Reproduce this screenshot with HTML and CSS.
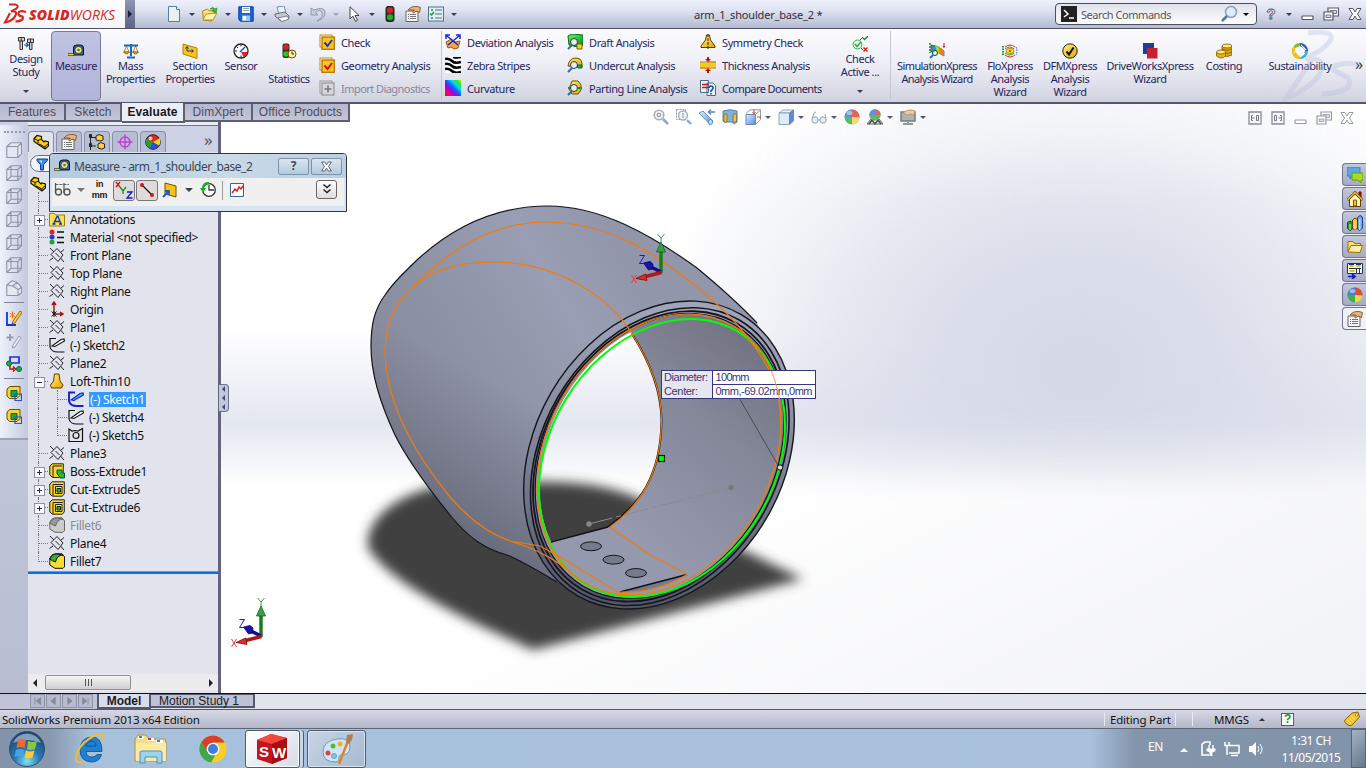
FILE: index.html
```html
<!DOCTYPE html>
<html lang="en">
<head>
<meta charset="utf-8">
<title>SolidWorks Premium 2013</title>
<link rel="stylesheet" href="styles.css">
</head>
<body>
<svg class="defs" aria-hidden="true">
<defs>
<linearGradient id="gold" x1="0" y1="0" x2="1" y2="1"><stop offset="0" stop-color="#fff27a"/><stop offset="1" stop-color="#e5a400"/></linearGradient>
<linearGradient id="blu" x1="0" y1="0" x2="1" y2="1"><stop offset="0" stop-color="#d9ebff"/><stop offset="1" stop-color="#3b78c8"/></linearGradient>
<linearGradient id="grn" x1="0" y1="0" x2="1" y2="1"><stop offset="0" stop-color="#5dff5d"/><stop offset="1" stop-color="#008a1c"/></linearGradient>
<linearGradient id="rainbow" x1="1" y1="0" x2="0" y2="1"><stop offset="0" stop-color="#d8f000"/><stop offset=".15" stop-color="#30e040"/><stop offset=".3" stop-color="#00e0e0"/><stop offset=".48" stop-color="#1060ff"/><stop offset=".65" stop-color="#a000e0"/><stop offset=".85" stop-color="#ff0060"/><stop offset="1" stop-color="#f00"/></linearGradient>
<symbol id="new" viewBox="0 0 16 16"><path d="M2.500.5h8l3 3v12h-11z" fill="#e8f2f6" stroke="#5a7f94"/><path d="M10.500.5v3h3" fill="#fff" stroke="#5a7f94"/></symbol>
<symbol id="open" viewBox="0 0 16 16"><path d="M.5 5l5-2 2 2 5-1v3l-3 8-8-1z" fill="#ffe27a" stroke="#b98313"/><path d="M1 14l3-6 11-1-4 7z" fill="#fff2b4" stroke="#c38b17"/><path d="M8 3q3-3 5 0l2-1-1 5-4-2 2-1q-1-2-4-1" fill="#38c428" stroke="#14821c" stroke-width=".6"/></symbol>
<symbol id="save" viewBox="0 0 16 16"><path d="M.8.8h14.400v14.400H2.500L.8 13.500z" fill="#1c63d8" stroke="#0b3ba0"/><path d="M4 1h8v6H4z" fill="#fff"/><path d="M5 2.500h6M5 4.500h6" stroke="#8aa" /><path d="M4 9.500h8v5.500H4z" fill="#9cc8f4"/><path d="M5 10h3v4H5z" fill="#fff"/></symbol>
<symbol id="print" viewBox="0 0 16 16"><path d="M3 1l7-1 2 7-7 1z" fill="#eaf4ff" stroke="#5a7890" stroke-width=".8"/><path d="M1 8l10-2 4 4v2l-8 3-6-5z" fill="#c5c9d2" stroke="#4f5668" stroke-width=".8"/><path d="M4 12l9-2 2 3-7 2.500z" fill="#fff" stroke="#4f5668" stroke-width=".7"/></symbol>
<symbol id="undo" viewBox="0 0 16 16"><path d="M1 2v7h7L5.500 6.500Q11 2 12 7t-5 8q9-3 8-9T4 4z" fill="#c7cbd8" stroke="#8d93a6" stroke-width=".9"/></symbol>
<symbol id="cursor" viewBox="0 0 16 16"><path d="M4 .8v12l3-2.500 2.500 5 2-1-2.500-4.800h4z" fill="#fff" stroke="#444"/></symbol>
<symbol id="traffic" viewBox="0 0 16 16"><rect x="4" y=".5" width="8" height="15" rx="2" fill="#333" stroke="#222"/><circle cx="8" cy="4.300" r="3" fill="#e02020"/><circle cx="8" cy="11.200" r="3" fill="#18b818"/></symbol>
<symbol id="props" viewBox="0 0 16 16"><path d="M1 5h12v10.500H1z" fill="#f4f4f4" stroke="#666"/><path d="M3 8.500h1m1 0h6M3 10.500h1m1 0h6M3 12.500h1m1 0h6" stroke="#777"/><path d="M3 4q3-4 9-3.500l3.500 1-1 5-3-1.500-3 2-1-1 2-2z" fill="#e8b878" stroke="#704818" stroke-width=".8"/></symbol>
<symbol id="list" viewBox="0 0 16 16"><rect x=".5" y="1" width="15" height="14" fill="#dfeff4" stroke="#46788c"/><path d="M3 4h2M3 12h2" stroke="#46788c" stroke-width="1.500"/><path d="M2 7.500l1.500 1.500 2.500-3" stroke="#1a9c28" stroke-width="1.500" fill="none"/><path d="M7 4h7M7 8h7M7 12h7" stroke="#5a6c74"/></symbol>
<symbol id="design" viewBox="0 0 16 16"><path d="M.5 1.500h6v3.500h-6zM2 5v8.500h2.500V5M9.500 3h6v3.500h-6zM11.500 6.500v7H14v-7" fill="#d4d4d4" stroke="#333"/><path d="M3.200 1.500V5M12.500 3v3.500" stroke="#333"/><path d="M6 9h4M8 7l2.500 2L8 11" fill="none" stroke="#1a50c0" stroke-width="1.200"/></symbol>
<symbol id="measure" viewBox="0 0 16 16"><path d="M5.500 12V5q0-3 3-3h4q3 0 3 3v7z" fill="#2c68b4" stroke="#111"/><circle cx="10.500" cy="7" r="3.600" fill="#f7e45c" stroke="#222" stroke-width=".7"/><circle cx="10.500" cy="7" r="1.300" fill="#3c6cac"/><path d="M0 10.500h6v2H0z" fill="#f4d410" stroke="#222" stroke-width=".6"/></symbol>
<symbol id="mass" viewBox="0 0 16 16"><path d="M8 1v12M1 2.500h14M4 14.500h8" stroke="#1668c0" stroke-width="2"/><path d="M3.500 3L1 9h5zM12.500 3L10 9h5z" fill="none" stroke="#886000" stroke-width=".7"/><path d="M.5 9h6q-3 4-6 0M9.500 9h6q-3 4-6 0" fill="#f0b410" stroke="#744c00" stroke-width=".7"/></symbol>
<symbol id="section" viewBox="0 0 16 16"><path d="M1 1l14 4v10.500L1 11z" fill="#fcc414" stroke="#b48000"/><path d="M5 8V4M3.500 5.500L5 3.500l1.500 2M5 8h6M9.500 6.500L11.500 8 9.500 9.500" fill="none" stroke="#1030a0"/></symbol>
<symbol id="sensor" viewBox="0 0 16 16"><circle cx="8" cy="8" r="7" fill="#fff" stroke="#222" stroke-width="1.300"/><path d="M8 9h6a6 6 0 01-3.500 5z" fill="#e82020"/><path d="M7 9l5-5" stroke="#1048e0" stroke-width="1.500"/><path d="M8 1.500v2M2 8h2M3.500 3.500l1.500 1.500M8 12.500v2" stroke="#222"/></symbol>
<symbol id="stats" viewBox="0 0 16 16"><rect x="1.500" y=".5" width="7" height="14.500" rx="2" fill="#333"/><circle cx="5" cy="4" r="2.800" fill="#e02020"/><circle cx="5" cy="11" r="2.800" fill="#28c828"/><circle cx="11" cy="11" r="4" fill="#fff0a0" stroke="#785000"/><path d="M11 8.500V11h2" stroke="#222" fill="none"/></symbol>
<symbol id="checkb" viewBox="0 0 16 16"><rect x="1" y="1" width="12" height="12" fill="#fff" stroke="#c8860c"/><rect x="3" y="3" width="12.300" height="12.300" fill="#fcc41c" stroke="#b87400" stroke-width="1.300"/><path d="M5.500 8.500l3 3.500 4.500-6" fill="none" stroke="currentColor" stroke-width="2"/></symbol>
<symbol id="import" viewBox="0 0 16 16"><rect x="1" y="1" width="12" height="12" fill="#e4e4e8" stroke="#999"/><rect x="3" y="3" width="12" height="12" fill="#d8d8dc" stroke="#888"/><path d="M9 5.500v7M5.500 9h7" stroke="#777" stroke-width="1.600"/></symbol>
<symbol id="deviation" viewBox="0 0 16 16"><path d="M1 8l5-3 4 3 5-1-2 7-4 1-3-2-3 1z" fill="#f0a83c" stroke="#a05808"/><path d="M2 2l11 9M14 2L3 11M1 5V1h4M11 1h4v4" fill="none" stroke="#1428d8" stroke-width="1.500"/></symbol>
<symbol id="zebra" viewBox="0 0 16 16"><path d="M0 0h16v16H0z" fill="#fff"/><path d="M0 2q4-1 7 2t9 1M0 7q4-1 7 2t9 1M0 12q4-1 7 2t9 1M8 0q4 1 8 0" fill="none" stroke="#000" stroke-width="2.600"/></symbol>
<symbol id="curv" viewBox="0 0 16 16"><path d="M0 0h16v16H0z" fill="url(#rainbow)"/></symbol>
<symbol id="draft" viewBox="0 0 16 16"><path d="M1 2l4-2 11 1v10l-5 2-9-2z" fill="url(#grn)" stroke="#086414"/><path d="M10 10h5v5h-5z" fill="#fcd020" stroke="#846000"/><circle cx="7" cy="8" r="3.500" fill="#dff0f8" stroke="#333"/><path d="M5 11l-4 4" stroke="#2c68d0" stroke-width="2"/></symbol>
<symbol id="undercut" viewBox="0 0 16 16"><path d="M1 9q1-8 8-8t6 9H9z" fill="url(#gold)" stroke="#6c5000"/><path d="M10 8h5v3h-4z" fill="#20b030" stroke="#064"/><circle cx="7" cy="8" r="3.500" fill="#dff0f8" stroke="#333"/><path d="M5 11l-4 4" stroke="#2c68d0" stroke-width="2"/></symbol>
<symbol id="parting" viewBox="0 0 16 16"><path d="M5 1h6l3 4v5l-3 4H5L2 9z" fill="url(#gold)" stroke="#6c5000"/><path d="M1 8h14" stroke="#0c9c20" stroke-width="2"/><circle cx="7" cy="8" r="3.500" fill="#dff0f8" stroke="#333"/><path d="M5 11l-4 4" stroke="#2c68d0" stroke-width="2"/></symbol>
<symbol id="symm" viewBox="0 0 16 16"><path d="M6.500 1h3l1 5 4.500 6v1.500H1V12l4.500-6z" fill="url(#gold)" stroke="#5c3c00"/><path d="M8 0v16" stroke="#402800" stroke-dasharray="3 1"/></symbol>
<symbol id="thick" viewBox="0 0 16 16"><path d="M0 5q4 2 8 0t8 0v6q-4-2-8 0t-8 0z" fill="#f8c828"/><path d="M0 5h16M0 11h16" stroke="#b07800"/><path d="M8 5L5 2h2V0h2v2h2zM8 11l-3 3h2v2h2v-2h2z" fill="#d01010"/></symbol>
<symbol id="compare" viewBox="0 0 16 16"><path d="M.5.5h8v12h-8zM7 3h6l2.500 2.500v10H7z" fill="#e6f0fa" stroke="#4c6c8c"/><path d="M2 4.500h6M2 7.500h6" stroke="#e01010" stroke-width="1.600"/><path d="M9 8q0-2 2-2t2 2-2 2.500v1.500m0 1v1.500" fill="none" stroke="#1c50b0" stroke-width="1.600"/></symbol>
<symbol id="checkact" viewBox="0 0 16 16"><circle cx="5.500" cy="8.500" r="4.500" fill="#e0ffe0" stroke="#34a844"/><path d="M3 8l2 2.500L9 6" stroke="#34a844" stroke-width="1.500" fill="none"/><path d="M11 2l1.500 1.500L16 0" stroke="#138a18" fill="none" stroke-width="1.300"/><path d="M8 4l3-3M9 12l2 2" stroke="#2050d0"/><path d="M11.500 11.500l4 4m0-4l-4 4" stroke="#e01818" stroke-width="1.400"/></symbol>
<symbol id="simx" viewBox="0 0 16 16"><path d="M1 0v10" stroke="#14a020" stroke-width="1.600" stroke-dasharray="2 1"/><path d="M2 2q7 0 13 6v5q-6-5-13-4z" fill="#2c90d0" stroke="#333" stroke-width=".6"/><path d="M8 3.500q5 1.500 7 4.500v5l-5-3z" fill="#f07810"/><path d="M6 2.700l3.500 1 1.500 7-3-1.500z" fill="#a8d820"/><circle cx="6" cy="10" r="2.500" fill="#dff" stroke="#333"/><path d="M4 12l-3 3" stroke="#2c68d0" stroke-width="2"/><path d="M15 0v4M14 3l1 1.500L16 3" fill="none" stroke="#d01010"/></symbol>
<symbol id="flox" viewBox="0 0 16 16"><path d="M1 3v10" stroke="#14a020" stroke-width="2" stroke-dasharray="1.500 1"/><path d="M3 4q5-4 10 0M3 12q5 4 10 0" fill="none" stroke="#e82020"/><path d="M3 6q5-4 9 0M3 10q5 4 9 0" fill="none" stroke="#18a028"/><ellipse cx="8" cy="8" rx="4" ry="2.500" fill="#ffe810" stroke="#c88000"/><circle cx="8" cy="8" r="1" fill="#b02000"/><path d="M14 4q2 4 0 8" fill="none" stroke="#2848d0" stroke-dasharray="1.500 1"/></symbol>
<symbol id="dfmx" viewBox="0 0 16 16"><circle cx="8" cy="8" r="7.200" fill="url(#gold)" stroke="#222"/><path d="M4.500 8.500l2.500 3 4.500-7" fill="none" stroke="#111" stroke-width="2"/></symbol>
<symbol id="dwx" viewBox="0 0 16 16"><path d="M1 0h11v11H1z" fill="#1d3f94"/><path d="M5 5h10.500v10.500H5z" fill="#c9202f"/></symbol>
<symbol id="cost" viewBox="0 0 16 16"><path d="M6 3v9q5 3 10 0V3z" fill="#e0a810" stroke="#805400" stroke-width=".8"/><path d="M6 6q5 3 10 0M6 9q5 3 10 0" fill="none" stroke="#805400" stroke-width=".8"/><ellipse cx="11" cy="3" rx="5" ry="2" fill="#ffe878" stroke="#805400" stroke-width=".8"/><path d="M.5 9v4q5 4 9 0V9z" fill="#e8b418" stroke="#805400" stroke-width=".8"/><ellipse cx="5" cy="9" rx="4.500" ry="2" fill="#ffe878" stroke="#805400" stroke-width=".8"/></symbol>
<symbol id="sust" viewBox="0 0 16 16"><g fill="none" stroke-width="4"><path d="M3 5a6 6 0 015-3" stroke="#7cc020"/><path d="M8 2a6 6 0 016 6" stroke="#2060b8"/><path d="M14 8a6 6 0 01-6 6" stroke="#34b0dc"/><path d="M8 14a6 6 0 01-5.500-9" stroke="#f4c010"/></g><path d="M3 5l5-2 5 4-1 5-5 1-3-4z" fill="#f4fafd"/><path d="M2 10l4-5M8 14l5-4M9 2l5 5" stroke="#fff" stroke-width="1.200"/></symbol>
<symbol id="mag" viewBox="0 0 16 16"><circle cx="6" cy="6" r="4.800" fill="#eef3fa" stroke="#9aa0ac" stroke-width="1.600"/><circle cx="6" cy="6" r="1.800" fill="none" stroke="#777"/><path d="M10 10l5 5" stroke="#6b9cd8" stroke-width="2.600"/></symbol>
<symbol id="magsq" viewBox="0 0 16 16"><path d="M.5.5h9v10h-9z" fill="none" stroke="#888" stroke-dasharray="2 1"/><circle cx="7" cy="6.500" r="4.500" fill="#eef3fa" stroke="#9aa0ac" stroke-width="1.400"/><path d="M6 5l1-1v5" stroke="#888" fill="none"/><path d="M11 11l4 4" stroke="#6b9cd8" stroke-width="2.400"/></symbol>
<symbol id="spy" viewBox="0 0 16 16"><path d="M0 4l4-2 10 10-3 3.500z" fill="url(#blu)" stroke="#5084b8"/><ellipse cx="11.500" cy="13" rx="2" ry="2.500" fill="#b8e0ff" stroke="#3c78b0"/><path d="M16 3h-6m2-2.500L9.500 3 12 5.500" fill="none" stroke="#3c74c4" stroke-width="1.500"/></symbol>
<symbol id="cutview" viewBox="0 0 16 16"><path d="M1 2q7-2.500 14 0v11q-3 3-4 1l-1-1H5q-3 1-4-1z" fill="#6ca4dc" stroke="#3c6ca4"/><path d="M2 5h3v8H2zM11 5h3.500v8H11z" fill="#f0b820" stroke="#7c5c10" stroke-width=".9"/></symbol>
<symbol id="orient" viewBox="0 0 16 16"><path d="M1 4.500L5 .8h10.500v10L11 15" fill="#f6f8fb" stroke="#888"/><path d="M1 5.500h9.500v10H1z" fill="url(#blu)" stroke="#4878a8"/><path d="M10.500 5.500L15.500.8" stroke="#888"/><path d="M9 0v5M7.500 3L9 5l1.500-2M16 8h-4" fill="none" stroke="#d83030"/></symbol>
<symbol id="display" viewBox="0 0 16 16"><path d="M1 4l4-3h10.500l-4 3z" fill="#e8f2fc" stroke="#67809c" stroke-width=".8"/><path d="M1 4h10.500v11.500H1z" fill="#d7eafa" stroke="#67809c" stroke-width=".8"/><path d="M11.500 4l4-3v11l-4 3.500z" fill="#4478c8" stroke="#4468a0" stroke-width=".8"/></symbol>
<symbol id="glasses" viewBox="0 0 16 16"><circle cx="4" cy="11" r="3.200" fill="#dcecf6" stroke="#8a93a0"/><circle cx="12" cy="11" r="3.200" fill="#dcecf6" stroke="#8a93a0"/><path d="M7 11h2M1 10l2-6 2-1M15 9l-1-4" fill="none" stroke="#8a93a0"/></symbol>
<symbol id="ball" viewBox="0 0 16 16"><circle cx="8" cy="8" r="7.500" fill="#3fb04a"/><path d="M8 .5A7.500 7.500 0 00.5 8.500L8 8z" fill="#4a80d0"/><path d="M8 .5a7.500 7.500 0 017.500 8L8 8z" fill="#e04a40"/><path d="M8 8l7.500.5A7.500 7.500 0 018 15.500z" fill="#f2d650"/><ellipse cx="5.500" cy="4" rx="3" ry="2" fill="#fff" opacity=".45"/></symbol>
<symbol id="scenei" viewBox="0 0 16 16"><path d="M0 15l4-5h8l4 5z" fill="#eee" stroke="#444"/><path d="M2 15l3-4 3 4 3-4 3 4" fill="none" stroke="#333" stroke-width="1.500"/><circle cx="8" cy="6" r="5.700" fill="#3fb04a"/><path d="M8 .3A5.700 5.700 0 002.300 6H8z" fill="#4a80d0"/><path d="M8 .3A5.700 5.700 0 0113.700 6H8z" fill="#e04a40"/></symbol>
<symbol id="screen" viewBox="0 0 16 16"><path d="M1 3h14v9H1z" fill="#9aa" stroke="#666" stroke-width="1.500"/><path d="M3 15h10M8 12v3" stroke="#888" stroke-width="2"/><path d="M3 4q4-4 9-3l3 1-1 4-3-1-3 1z" fill="#ecc088" stroke="#a07848" stroke-width=".7"/></symbol>
<symbol id="min" viewBox="0 0 16 16"><rect x="2" y="10" width="11" height="3.500" rx=".5" fill="#fff" stroke="currentColor" stroke-width="1.200"/></symbol>
<symbol id="restore" viewBox="0 0 16 16"><path d="M5 2h10.500v8H5z" fill="#fff" stroke="currentColor" stroke-width="1.200"/><path d="M7 4.500h6.500v3H7z" fill="#dde" stroke="currentColor" stroke-width=".8"/><path d="M1 6h9v8H1z" fill="#fff" stroke="currentColor" stroke-width="1.200"/><path d="M3 9h5v2.500H3z" fill="#dde" stroke="currentColor" stroke-width=".8"/></symbol>
<symbol id="close" viewBox="0 0 16 16"><path d="M2 2.500h4L8 6l2-3.500h4L10.500 8l3.500 5.500h-4L8 10l-2 3.500H2L5.500 8z" fill="#fff" stroke="currentColor"/></symbol>
<symbol id="paneL" viewBox="0 0 16 16"><path d="M2 2h12v12H2z" fill="#f6f6f9" stroke="#888d9c" stroke-width="1.300"/><path d="M6 5.500H4.500v5H6M9.500 5.500h2v5h-2zM5 8h2.500" fill="none" stroke="#777c8c"/></symbol>
<symbol id="paneR" viewBox="0 0 16 16"><path d="M2 2h12v12H2z" fill="#f6f6f9" stroke="#888d9c" stroke-width="1.300"/><path d="M10 5.500h1.500v5H10M4.500 5.500h2v5h-2zM8.500 8H11" fill="none" stroke="#777c8c"/></symbol>
<symbol id="cube" viewBox="0 0 16 16"><path d="M.8 4.500h11v11h-11zM.8 4.500L5 .8h10.500v11l-3.700 3.700M11.800 4.500L15.500.8" fill="#e4e8f2" stroke="#8f95a5" stroke-width="1.100"/></symbol>
<symbol id="cubew" viewBox="0 0 16 16"><path d="M.8 4.500h11v11h-11zM.8 4.500L5 .8h10.500v11l-3.700 3.700M11.800 4.500L15.500.8M5 .8v10.500h10.500M5 11.300L.8 15.500" fill="none" stroke="#8f95a5" stroke-width="1.100"/></symbol>
<symbol id="iso" viewBox="0 0 16 16"><path d="M.8 5L6 .8l5 1.500 4.500 5v5.500L12 15.500H.8zM11 2.300L6.500 6l5.500 3.500V15M12 9.500l3.500-2.200M.8 5l5.700 1" fill="#e4e8f2" stroke="#8f95a5" stroke-width="1.100"/></symbol>
<symbol id="sketchn" viewBox="0 0 16 16"><path d="M1 2v13h9" fill="none" stroke="#1434e0" stroke-width="1.800"/><path d="M4 7l5-4M4 3l5 4M6.500 1.500v7" stroke="#f07800"/><path d="M14 1l2 1.500L9 13l-3 1 1-3z" fill="#fcc830" stroke="#905000" stroke-width=".8"/></symbol>
<symbol id="addp" viewBox="0 0 16 16"><path d="M4 1v7M.5 4.500h7" stroke="#9ba0ae" stroke-width="2"/><path d="M13 3l2 1.500L9 14l-2.500 1 .5-3z" fill="#e8eaf0" stroke="#9ba0ae"/></symbol>
<symbol id="route" viewBox="0 0 16 16"><path d="M4 1h9v6H4z" fill="none" stroke="#1434e0" stroke-width="1.700"/><circle cx="3" cy="7.500" r="2.500" fill="#20b030" stroke="#064"/><circle cx="13" cy="13" r="2.500" fill="#20b030" stroke="#064"/><path d="M4 10v3h4M7 10.500l2.500 2.500L7 15.500" fill="none" stroke="#c01010" stroke-width="1.500"/></symbol>
<symbol id="feat" viewBox="0 0 16 16"><path d="M1 3l3-2.500h10v9l-3 3H3.500L1 10z" fill="#fcd42c" stroke="#6b5000"/><path d="M5 4.500h6v6H5z" fill="#20a830" stroke="#064"/><path d="M9 8h6.500v6.500H9z" fill="none" stroke="#2850d8" stroke-width="1.200"/></symbol>
<symbol id="part" viewBox="0 0 16 16"><path d="M1 4.500L4 1.500l4.500 1v3L11 8l1-1 3.500 1v4L12 15 1 7.500z" fill="#f9cf1f" stroke="#1a1400" stroke-width="1.200"/><path d="M1 4.500l4 2v3M5 6.500L8.500 5M6 10l6 3v2M12 12.500l3.500-3" fill="none" stroke="#1a1400"/></symbol>
<symbol id="config" viewBox="0 0 16 16"><path d="M1.500 0v16M1.500 3.500H7M1.500 12H7" fill="none" stroke="#222"/><path d="M.8 1h1.500v2H.8zM.8 10h1.500v2H.8z" fill="none" stroke="#222" stroke-width="1.500"/><path d="M7 2l3-1.500L14 2v4l-3 1-4-1zM9 10l3-1.500 3.500 1.500v4l-3 1-3.500-1z" fill="#fcd42c" stroke="#222"/></symbol>
<symbol id="dimx" viewBox="0 0 16 16"><circle cx="8" cy="8" r="5" fill="none" stroke="#c040d8" stroke-width="1.500"/><path d="M8 .5v15M.5 8h15" stroke="#c040d8" stroke-width="1.500"/></symbol>
<symbol id="ballb" viewBox="0 0 16 16"><circle cx="8" cy="8" r="7.300" fill="#e02818" stroke="#222"/><path d="M8 8L1 5q-1 7 4 9.500z" fill="#20a038"/><path d="M8 8l-3 6.500q6 2 9-3z" fill="#2850d0"/><path d="M8 8l7-4q1 5-1 7.500z" fill="#f8d820"/><circle cx="5.500" cy="4.500" r="2" fill="#fff" opacity=".7"/></symbol>
<symbol id="funnel" viewBox="0 0 16 16"><path d="M3 3h10.500v1.500l-4 4V14h-3V8.500L3 4.500z" fill="#3c8ce8" stroke="#0a3c98"/><path d="M5 4.500h3v3z" fill="#c8e4ff"/></symbol>
<symbol id="annot" viewBox="0 0 16 16"><path d="M.5 2.500h5l1 1.500h9v11H.5z" fill="#ffe04c" stroke="#a08000"/><path d="M4.500 13L8 5.500h1L12 13M6 10.500h4.500M3.500 13h3M10 13h3" fill="none" stroke="#1434b4" stroke-width="1.300"/></symbol>
<symbol id="mat" viewBox="0 0 16 16"><circle cx="3" cy="3" r="2.500" fill="#e82018"/><circle cx="3" cy="8" r="2.500" fill="#1838e0"/><circle cx="3" cy="13" r="2.500" fill="#18a830"/><path d="M8 3h7M8 8.500h7M8 13.500h7" stroke="#111" stroke-width="1.500"/></symbol>
<symbol id="plane" viewBox="0 0 16 16"><path d="M8 1.500L14 8l-5 6.500L2 7.500zM1 1l4 4M15 15l-3.500-4M15 2.500l-3 2.500M.5 13.500L4 11M6.500 6l4 4" fill="none" stroke="#222"/></symbol>
<symbol id="origin" viewBox="0 0 16 16"><path d="M5 13V1M3 4l2-3 2 3M5 13h9M11 11l3 2-3 2" fill="none" stroke="#a01010" stroke-width="1.400"/><path d="M2.500 10.500l5 5m0-5l-5 5M5 10v6" stroke="#111"/></symbol>
<symbol id="sk" viewBox="0 0 16 16"><path d="M7 1.500H1v8.500q1 5 8 5h6.500" fill="none" stroke="#111" stroke-width="1.200"/><path d="M3 9l9-6.500 3-.5.500 2L6 9.500z" fill="#fff" stroke="#111" stroke-width="1.100"/></symbol>
<symbol id="skb" viewBox="0 0 16 16"><path d="M7 1.500H1v8.500q1 5 8 5h6.500" fill="none" stroke="#1420d8" stroke-width="1.900"/><path d="M3 9l9-6.500 3-.5.500 2L6 9.500z" fill="#40b8e8" stroke="#1420c0" stroke-width="1.100"/></symbol>
<symbol id="sk5" viewBox="0 0 16 16"><path d="M1 2v12.500h13.500V1.500L10 4 7 3.500 4 4zM11 8.500a3 3 0 11-6 0 3 3 0 016 0" fill="none" stroke="#111" stroke-width="1.200"/></symbol>
<symbol id="loft" viewBox="0 0 16 16"><path d="M5.500 1h4.500l1 7 3 4-1.500 3h-10L1.500 12l3-4z" fill="url(#gold)" stroke="#5c3c00"/></symbol>
<symbol id="boss" viewBox="0 0 16 16"><path d="M.8 3l2.500-2.200h11v9L10 14.500H3.500L.8 12z" fill="#fcd42c" stroke="#222"/><path d="M4 3v11M4 3h9" stroke="#222"/><path d="M8 7h5v3h2.500v5H11l-1-2-2-2z" fill="#28b838" stroke="#053"/></symbol>
<symbol id="cut" viewBox="0 0 16 16"><path d="M.8 3l2.500-2.200h12v12l-2 2.400H3.500L.8 13z" fill="#fcd42c" stroke="#222"/><path d="M4 3.500h10M4 3.500V15M6.500 5.500h6.500v7H6.500z" fill="#ffe760" stroke="#222"/><path d="M8 7.500h3.500v3.500H8z" fill="#28b838" stroke="#021"/></symbol>
<symbol id="fillet" viewBox="0 0 16 16"><path d="M.8 6Q2 1 7 .8h6l2.500 3v10L14 15.300H6L.8 12z" fill="#fcdc2c" stroke="#111"/><path d="M.8 6Q3 1 8 1l6 1q-6 0-7.500 7-3-1-5.700-3z" fill="#30b040" stroke="#111"/></symbol>
<symbol id="filletg" viewBox="0 0 16 16"><path d="M.8 6Q2 1 7 .8h6l2.500 3v10L14 15.300H6L.8 12z" fill="#ccc" stroke="#666"/><path d="M.8 6Q3 1 8 1l6 1q-6 0-7.500 7-3-1-5.700-3z" fill="#999" stroke="#666"/></symbol>
<symbol id="chat" viewBox="0 0 16 16"><path d="M0 0h13v9H6l-3 3V9H0z" fill="#54a8e4" stroke="#3880b8"/><path d="M5 6h11v7h-2v3l-3-3H5z" fill="#a8dc1c" stroke="#6c9c10"/></symbol>
<symbol id="home" viewBox="0 0 16 16"><path d="M12 1h2v5h-2z" fill="#c02020" stroke="#600"/><path d="M2.500 8v7.500h11V8L8 3z" fill="#fff4b8" stroke="#604000"/><path d="M.5 9L8 1.500 15.500 9" fill="none" stroke="#604000" stroke-width="2.600"/><path d="M.5 9L8 1.500 15.500 9" fill="none" stroke="#f4c030" stroke-width="1.300"/><path d="M6.500 9h3v6h-3z" fill="#f8c020" stroke="#604000" stroke-width=".8"/></symbol>
<symbol id="books" viewBox="0 0 16 16"><path d="M.5 7.500L3 6l2.500 1.500v6.500L3 15.500.5 13.500z" fill="#1ca02c" stroke="#053"/><path d="M5.500 5L8 3l2.500 1.500V13L8 15l-2.500-1.500z" fill="#fcc020" stroke="#640"/><path d="M10.500 2.500L13 .5l2.500 1.500v11L12.500 15.500l-2-1.500z" fill="#70a4ec" stroke="#148"/><path d="M3 9v6M8 6v9M12.800 4v11" stroke="#fff" stroke-width=".8"/></symbol>
<symbol id="folder" viewBox="0 0 16 16"><path d="M1 13V2.500h5l1.500 2h6V7" fill="#ffdf70" stroke="#a06c08"/><path d="M1 13L4 6.500h11.500L13 13.500z" fill="#fff0a8" stroke="#a06c08"/></symbol>
<symbol id="palette" viewBox="0 0 16 16"><path d="M.5.5h15v10H.5z" fill="#f2f6ff" stroke="#1c3464"/><path d="M2.500 3h4M9.500 3h4M2.500 8h5" stroke="#e8c400" stroke-width="2"/><path d="M2 1.500h5M9 1.500h5M2 5.500h12M9.500 6v4M12.500 6v4" stroke="#1c3464"/><path d="M1 13.500h6M5 11l3 2.500-3 2.500" fill="none" stroke="#0c1cb8" stroke-width="1.700"/></symbol>
<symbol id="tag" viewBox="0 0 16 16"><path d="M1 9L8 2l6-1 1.500 5L8 14q-2 1.500-4 0l-3-2.500q-1-1 0-2.500z" fill="#f8c020" stroke="#946400"/><path d="M3.500 9.500l4 3.500M5.500 7.500l4 3.500M7.500 5.500L11.500 9" stroke="#fff4b0"/><circle cx="12.500" cy="4" r="1.200" fill="#fff" stroke="#946400" stroke-width=".6"/></symbol>
<symbol id="triad" viewBox="0 0 40 52"><path d="M31 39V16" stroke="#1c7c1c" stroke-width="3.500"/><path d="M26.500 18L31 8l4.500 10z" fill="#3aa048" stroke="#0c6414" stroke-width=".8"/><path d="M31 38l-12-6" stroke="#10108c" stroke-width="3.500"/><path d="M13.500 29l6.500-1.500 3 2.500-.5 5-4 1z" fill="#1414a8" stroke="#08087c" stroke-width=".8"/><path d="M31.500 38.500l-16 4" stroke="#b01818" stroke-width="3.500"/><path d="M6 44.500l9.500-4.500 1.500 6.500z" fill="#d03030" stroke="#900" stroke-width=".8"/><path d="M27.500 0l3.500 4 3.500-4M31 4v4" fill="none" stroke="#2aa040"/><path d="M9.500 21.500h5l-5 8h5" fill="none" stroke="#1414e8"/><path d="M1.500 41l5 8M6.500 41l-5 8" stroke="#f03838"/></symbol>
</defs>
</svg>

<div class="app">
<header class="titlebar">
  <div class="brand">
    <svg width="24" height="22" viewBox="0 0 24 22"><path d="M6 1.500h6q5 1 1 4.500L8 8.500q7-1 4.500 4Q10 18 2 19.500L7 10" fill="none" stroke="#d8261c" stroke-width="2"/><path d="M23 9q-7-2-7.500 1t4 3.500q2 4.500-7 5" fill="none" stroke="#d8261c" stroke-width="2.200"/></svg>
    <span class="brand-name"><b>SOLID</b>WORKS</span>
  </div>
  <div class="brand-arrow"></div>
  <div class="quick">
    <span class="q"><svg><use href="#new"/></svg><i class="dd"></i></span>
    <span class="q"><svg><use href="#open"/></svg><i class="dd"></i></span>
    <span class="q"><svg><use href="#save"/></svg><i class="dd"></i></span>
    <span class="q"><svg><use href="#print"/></svg><i class="dd"></i></span>
    <span class="q"><svg><use href="#undo"/></svg><i class="dd dim"></i></span>
    <span class="q"><svg><use href="#cursor"/></svg><i class="dd"></i></span>
    <span class="q s"><svg><use href="#traffic"/></svg></span>
    <span class="q s"><svg><use href="#props"/></svg></span>
    <span class="q"><svg><use href="#list"/></svg><i class="dd end"></i></span>
  </div>
  <div class="doc-title">arm_1_shoulder_base_2 *</div>
  <div class="search"><svg class="prompt" viewBox="0 0 16 16"><rect width="16" height="16" fill="#222"/><path d="M3 4l4 4-4 3M8 12h5" fill="none" stroke="#fff" stroke-width="1.500"/></svg><span>Search Commands</span><svg class="lens" viewBox="0 0 18 18"><circle cx="11" cy="7" r="5.500" fill="#dcecfb" stroke="#8ca0b8" stroke-width="1.500"/><path d="M7 11l-5 5" stroke="#4c78b0" stroke-width="2.500"/></svg><i class="dd blk"></i></div>
  <div class="winbtns"><span class="help">?</span><i class="dd"></i><svg><use href="#min"/></svg><svg><use href="#restore"/></svg><svg><use href="#close"/></svg></div>
</header>

<nav class="ribbon">
  <div class="rb" style="width:52px"><div class="up"><svg><use href="#design"/></svg><p>Design<br>Study</p></div><i class="dd below"></i></div>
  <div class="rb active"><svg><use href="#measure"/></svg><p>Measure</p></div>
  <div class="rb" style="width:57px"><svg><use href="#mass"/></svg><p>Mass<br>Properties</p></div>
  <div class="rb" style="width:62px"><svg><use href="#section"/></svg><p>Section<br>Properties</p></div>
  <div class="rb" style="width:40px"><svg><use href="#sensor"/></svg><p>Sensor</p></div>
  <div class="rb" style="width:56px"><svg><use href="#stats"/></svg><p><br>Statistics</p></div>
  <ul class="rl" style="width:124px"><li><svg class="blue"><use href="#checkb"/></svg>Check</li><li><svg class="red"><use href="#checkb"/></svg>Geometry Analysis</li><li class="off"><svg><use href="#import"/></svg>Import Diagnostics</li></ul>
  <ul class="rl b" style="width:122px"><li><svg><use href="#deviation"/></svg>Deviation Analysis</li><li><svg><use href="#zebra"/></svg>Zebra Stripes</li><li><svg><use href="#curv"/></svg>Curvature</li></ul>
  <ul class="rl n" style="width:133px"><li><svg><use href="#draft"/></svg>Draft Analysis</li><li><svg><use href="#undercut"/></svg>Undercut Analysis</li><li><svg><use href="#parting"/></svg>Parting Line Analysis</li></ul>
  <ul class="rl n" style="width:134px"><li><svg><use href="#symm"/></svg>Symmetry Check</li><li><svg><use href="#thick"/></svg>Thickness Analysis</li><li class="snug"><svg><use href="#compare"/></svg>Compare Documents</li></ul>
  <div class="rb" style="width:60px"><div class="up"><svg><use href="#checkact"/></svg><p>Check<br>Active ...</p></div><i class="dd below"></i></div>
  <div class="rb sep snug" style="width:93px"><svg><use href="#simx"/></svg><p>SimulationXpress<br>Analysis Wizard</p></div>
  <div class="rb" style="width:54px"><svg><use href="#flox"/></svg><p>FloXpress<br>Analysis<br>Wizard</p></div>
  <div class="rb" style="width:66px"><svg><use href="#dfmx"/></svg><p>DFMXpress<br>Analysis<br>Wizard</p></div>
  <div class="rb" style="width:94px"><svg><use href="#dwx"/></svg><p>DriveWorksXpress<br>Wizard</p></div>
  <div class="rb" style="width:54px"><svg><use href="#cost"/></svg><p>Costing</p></div>
  <div class="rb" style="width:98px"><svg><use href="#sust"/></svg><p>Sustainability</p></div>
  <div class="more">»</div>
  <svg class="mark" viewBox="0 0 80 72"><path d="M26 3q38-4 14 16L24 29q24-2 12 18Q22 62 4 68l26-38M76 34q-26-2-24 6l14 8q8 14-26 16" fill="none" stroke="#b9c0de" stroke-width="5" opacity=".38"/></svg>
</nav>

<main class="stage">
  <svg class="scene" viewBox="221 104 1145 589" width="1145" height="589">
    <defs>
      <radialGradient id="haze" gradientUnits="userSpaceOnUse" cx="0" cy="0" r="1" gradientTransform="translate(1080 370) scale(440 360)"><stop offset="0" stop-color="#d5d9e6"/><stop offset=".3" stop-color="#d7dbe8" stop-opacity=".93"/><stop offset=".55" stop-color="#dcdfeb" stop-opacity=".72"/><stop offset=".8" stop-color="#e2e5ef" stop-opacity=".35"/><stop offset="1" stop-color="#e6e8f0" stop-opacity="0"/></radialGradient>
      <linearGradient id="fadeg" gradientUnits="userSpaceOnUse" x1="0" y1="104" x2="0" y2="500"><stop offset="0" stop-color="#aaa"/><stop offset=".25" stop-color="#fff"/><stop offset=".78" stop-color="#fff"/><stop offset=".88" stop-color="#888"/><stop offset="1" stop-color="#000"/></linearGradient>
      <mask id="fade" maskUnits="userSpaceOnUse" x="221" y="104" width="1145" height="589"><rect x="221" y="104" width="1145" height="589" fill="url(#fadeg)"/></mask>
      <linearGradient id="band" x1="0" y1="0" x2="0" y2="1"><stop offset="0" stop-color="#e0e4ef" stop-opacity="0"/><stop offset=".6" stop-color="#e0e4ef" stop-opacity=".9"/><stop offset="1" stop-color="#e0e4ef" stop-opacity="0"/></linearGradient>
      <linearGradient id="br" x1="0" y1="0" x2="1" y2="1"><stop offset=".55" stop-color="#fff"/><stop offset="1" stop-color="#f1f2f6"/></linearGradient>
      <linearGradient id="body" gradientUnits="userSpaceOnUse" x1="385" y1="420" x2="640" y2="270"><stop offset="0" stop-color="#85899b"/><stop offset=".35" stop-color="#8e92a5"/><stop offset=".72" stop-color="#9a9eb4"/><stop offset="1" stop-color="#9296aa"/></linearGradient>
      <linearGradient id="bodylow" gradientUnits="userSpaceOnUse" x1="530" y1="400" x2="455" y2="540"><stop offset="0" stop-color="#666a7a" stop-opacity="0"/><stop offset="1" stop-color="#5c6070" stop-opacity=".75"/></linearGradient>
      <linearGradient id="inner" gradientUnits="userSpaceOnUse" x1="720" y1="320" x2="680" y2="540"><stop offset="0" stop-color="#737584"/><stop offset=".4" stop-color="#858899"/><stop offset="1" stop-color="#979aaf"/></linearGradient>
      <linearGradient id="rim" gradientUnits="userSpaceOnUse" x1="600" y1="320" x2="730" y2="590"><stop offset="0" stop-color="#a1a5b9"/><stop offset=".5" stop-color="#808498"/><stop offset="1" stop-color="#525567"/></linearGradient>
      <filter id="soft" x="-20%" y="-20%" width="140%" height="140%"><feGaussianBlur stdDeviation="6"/></filter>
      <clipPath id="mouth"><ellipse cx="661" cy="455" rx="112" ry="147" transform="rotate(29.800 661 455)"/></clipPath>
      <clipPath id="hole"><path d="M632 334C650 362 661 390 661.500 420C661 475 640 505 608 527L549 542L500 542V300H620Z"/></clipPath>
      <g id="backdrop">
        <rect x="221" y="104" width="1145" height="589" fill="url(#br)"/>
        <rect x="221" y="330" width="1145" height="155" fill="url(#band)"/>
        <g mask="url(#fade)"><rect x="221" y="104" width="1145" height="589" fill="url(#haze)"/></g>
        <path d="M368 548C364 518 400 493 440 486C480 480 510 481 560 482C620 485 650 500 690 530L745 551L803 579L533 650C500 634 396 592 368 548Z" fill="#3f3f3f" filter="url(#soft)"/>
      </g>
      <path id="shell" d="M557 582C535 569 520 560 507 555C488 550 470 540 450 515C425 484 405 455 395 435C380 403 371 375 371 347C371 325 374 310 385 295C395 280 405 272 417 260C455 225 500 206 548 206C600 206 650 234 697 268C720 287 740 305 757 323L790 400L650 600Z"/>
    </defs>
    <use href="#backdrop"/>
    <use href="#shell" fill="url(#body)"/>
    <use href="#shell" fill="url(#bodylow)"/>
    <path d="M557 582C535 569 520 560 507 555C488 550 470 540 450 515C425 484 405 455 395 435C380 403 371 375 371 347C371 325 374 310 385 295C395 280 405 272 417 260C455 225 500 206 548 206C600 206 650 234 697 268C720 287 740 305 757 323" fill="none" stroke="#15151c" stroke-width="1.200"/>
    <g fill="none" stroke="#16161e" transform="rotate(30.200 659 455)">
      <ellipse cx="659" cy="455" rx="124.700" ry="162.700" fill="url(#rim)" stroke-width="1.400"/>
      <ellipse cx="660.500" cy="456" rx="118" ry="158" stroke-width="1.600"/>
      <ellipse cx="660" cy="456" rx="115.500" ry="154" stroke-width="1.800"/>
      <ellipse cx="660" cy="455.500" rx="114" ry="151" stroke-width="1.200" fill="url(#inner)"/>
    </g>
    <g clip-path="url(#mouth)">
      <g clip-path="url(#hole)"><use href="#backdrop"/></g>
      <path d="M632 334C650 362 661 390 661.500 420C661 475 640 505 608 527" fill="none" stroke="#15151c" stroke-width="2"/>
      <path d="M549 542L608 527L687 574.500L619 592Q570 585 549 542Z" fill="#9599ae"/>
      <path d="M619 592L687 574.500Q650 595 619 592Z" fill="#777a8b"/>
    </g>
    <path d="M551 542L608 527M687 574.500L620 592" stroke="#101018" stroke-width="1.400"/>
    <g fill="#777a8c" stroke="#15151c"><ellipse cx="591" cy="546.300" rx="10.500" ry="4.400"/><ellipse cx="613.500" cy="559.700" rx="10.500" ry="4.400"/><ellipse cx="636" cy="573" rx="10.500" ry="4.400"/></g>
    <ellipse cx="662" cy="458" rx="112.700" ry="147.400" transform="rotate(31.200 662 458)" fill="none" stroke="#0f0" stroke-width="2"/>
    <g fill="none" stroke="#f57a08" stroke-width="1.200">
      <ellipse cx="659" cy="454.500" rx="112.400" ry="148.300" transform="rotate(29.400 659 454.500)"/>
      <path d="M413 287C450 248 495 222 547 222C610 223 655 252 703 292C730 315 741 328 747 337C770 365 781 390 781 425"/>
      <path d="M413 287C428 270 460 262 493 262C560 262 612 300 632 334C650 362 661.500 390 661.500 420C661 475 640 505 610 527L647 553L687 574.500Q655 594 618 592L560 557L540 546L510 541"/>
      <path d="M413 287C393 305 385 325 385 353C387 410 420 460 450 497C470 520 490 534 510 541C540 550 560 562 580 580"/>
    </g>
    <path d="M589 524L731 487.500" stroke="#8b8a8c" stroke-dasharray="24 4 5 4" fill="none"/><circle cx="589" cy="524" r="2.700" fill="#898989"/><circle cx="731" cy="487.500" r="2.700" fill="#77777c"/>
    <path d="M738 396L779 467" stroke="#4b4c50" fill="none"/><circle cx="780" cy="467.500" r="2.700" fill="#ddd" stroke="#111"/>
    <rect x="658.500" y="455.500" width="6" height="6" fill="#0f0" stroke="#042004" stroke-width="1.200"/>
    <use href="#triad" x="630" y="234" width="40" height="52"/>
    <use href="#triad" x="230" y="598" width="40" height="52"/>
    <g class="callout"><rect x="661.500" y="370.500" width="51" height="28" fill="#e6e7ee" stroke="#36367c"/><rect x="712.500" y="370.500" width="103" height="14" fill="#fff" stroke="#36367c"/><rect x="712.500" y="384.500" width="103" height="14" fill="#fff" stroke="#36367c"/>
      <text x="664" y="381" textLength="44">Diameter:</text><text x="664" y="395" textLength="34">Center:</text><text x="715.500" y="381" textLength="34">100mm</text><text x="715.500" y="395" textLength="97">0mm,-69.02mm,0mm</text></g>
    <path d="M771.500 371C774 378 776 384 778 392L779.500 399" fill="none" stroke="#f59a48"/>
  </svg>

  <section class="left">
    <div class="tabs"><span style="width:66px">Features</span><span style="width:56px">Sketch</span><span class="on" style="width:63px">Evaluate</span><span style="width:68px">DimXpert</span><span style="width:97px">Office Products</span></div>
    <div class="cols">
      <aside class="tools">
        <div class="toolbox">
          <svg><use href="#cube"/></svg><svg><use href="#cubew"/></svg><svg><use href="#cubew"/></svg><svg><use href="#cubew"/></svg><svg><use href="#cubew"/></svg><svg><use href="#cubew"/></svg><svg><use href="#iso"/></svg>
          <hr><svg><use href="#sketchn"/></svg><svg><use href="#addp"/></svg><svg><use href="#route"/></svg>
          <hr><svg><use href="#feat"/></svg><svg><use href="#feat"/></svg>
        </div>
      </aside>
      <div class="tree-panel">
        <div class="ptabs"><span class="on"><svg><use href="#part"/></svg></span><span><svg><use href="#props"/></svg></span><span><svg><use href="#config"/></svg></span><span><svg><use href="#dimx"/></svg></span><span><svg><use href="#ballb"/></svg></span><em>»</em></div>
        <div class="filter"><svg><use href="#funnel"/></svg></div>
        <div class="root"><svg><use href="#part"/></svg></div>
        <ul class="tree">
          <li></li>
          <li class="x"><svg><use href="#annot"/></svg><span>Annotations</span></li>
          <li><svg><use href="#mat"/></svg><span>Material &lt;not specified&gt;</span></li>
          <li><svg><use href="#plane"/></svg><span>Front Plane</span></li>
          <li><svg><use href="#plane"/></svg><span>Top Plane</span></li>
          <li><svg><use href="#plane"/></svg><span>Right Plane</span></li>
          <li><svg><use href="#origin"/></svg><span>Origin</span></li>
          <li><svg><use href="#plane"/></svg><span>Plane1</span></li>
          <li><svg><use href="#sk"/></svg><span>(-) Sketch2</span></li>
          <li><svg><use href="#plane"/></svg><span>Plane2</span></li>
          <li class="x minus"><svg><use href="#loft"/></svg><span>Loft-Thin10</span></li>
          <li class="sub"><svg><use href="#skb"/></svg><span class="sel">(-) Sketch1</span></li>
          <li class="sub"><svg><use href="#sk"/></svg><span>(-) Sketch4</span></li>
          <li class="sub last"><svg><use href="#sk5"/></svg><span>(-) Sketch5</span></li>
          <li><svg><use href="#plane"/></svg><span>Plane3</span></li>
          <li class="x"><svg><use href="#boss"/></svg><span>Boss-Extrude1</span></li>
          <li class="x"><svg><use href="#cut"/></svg><span>Cut-Extrude5</span></li>
          <li class="x"><svg><use href="#cut"/></svg><span>Cut-Extrude6</span></li>
          <li class="off"><svg><use href="#filletg"/></svg><span>Fillet6</span></li>
          <li><svg><use href="#plane"/></svg><span>Plane4</span></li>
          <li class="last"><svg><use href="#fillet"/></svg><span>Fillet7</span></li>
        </ul>
        <div class="rollback"></div>
        <div class="hscroll"><i class="la"></i><b><u></u><u></u><u></u></b><i class="ra"></i></div>
      </div>
    </div>
  </section>

  <div class="grip"><i></i><i></i><i></i></div>
  <div class="hud"><span><svg><use href="#mag"/></svg></span><span><svg><use href="#magsq"/></svg></span><span><svg><use href="#spy"/></svg></span><span><svg><use href="#cutview"/></svg></span><span class="w"><svg><use href="#orient"/></svg><i class="dd"></i></span><span class="w"><svg><use href="#display"/></svg><i class="dd"></i></span><span class="w"><svg><use href="#glasses"/></svg><i class="dd"></i></span><span><svg><use href="#ball"/></svg></span><span class="w"><svg><use href="#scenei"/></svg><i class="dd"></i></span><span class="w"><svg><use href="#screen"/></svg><i class="dd"></i></span></div>
  <div class="docbtns"><svg><use href="#paneL"/></svg><svg><use href="#paneR"/></svg><svg><use href="#min"/></svg><svg><use href="#restore"/></svg><svg><use href="#close"/></svg></div>
  <div class="taskpane"><span><svg><use href="#chat"/></svg></span><span><svg><use href="#home"/></svg></span><span><svg><use href="#books"/></svg></span><span><svg><use href="#folder"/></svg></span><span><svg><use href="#palette"/></svg></span><span><svg><use href="#ball"/></svg></span><span class="lit"><svg><use href="#props"/></svg></span></div>

  <div class="dialog">
    <div class="dtitle"><svg><use href="#measure"/></svg><span>Measure - arm_1_shoulder_base_2</span><b>?</b><b><svg viewBox="0 0 16 16"><use href="#close"/></svg></b></div>
    <div class="dbody">
      <svg width="18" height="16" viewBox="0 0 18 16"><path d="M1.500 2.500H15" stroke="#666" stroke-dasharray="3 1"/><circle cx="4.500" cy="10" r="3" fill="none" stroke="#555" stroke-width="1.400"/><circle cx="13" cy="10" r="3" fill="none" stroke="#555" stroke-width="1.400"/><path d="M1.500 1v10M10 1v10" stroke="#555" stroke-width="1.200"/></svg>
      <i class="dd big g"></i>
      <span class="inmm"><b>in</b><b>mm</b></span>
      <span class="press"><svg width="20" height="20" viewBox="0 0 20 20"><path d="M2 1l4 5M6 1L2 6" stroke="#e01010" stroke-width="1.300"/><path d="M6 6l3 4 3-4M9 10v3" fill="none" stroke="#109010" stroke-width="1.300"/><path d="M13 11h5l-5 6h5.500" fill="none" stroke="#1414d0" stroke-width="1.300"/></svg></span>
      <span class="press"><svg width="20" height="20" viewBox="0 0 20 20"><path d="M5 4l10 10" stroke="#111" stroke-width="1.300"/><circle cx="5" cy="4" r="2" fill="#e01010"/><circle cx="15" cy="14" r="2" fill="#e01010"/></svg></span>
      <svg class="yl" width="16" height="16" viewBox="0 0 16 16"><path d="M3 1l11 3v11L3 12z" fill="#fcc414" stroke="#6c5000"/><path d="M1 15l6-6M3 9h4v4" fill="none" stroke="#1c58d0" stroke-width="1.800"/></svg>
      <i class="dd big"></i>
      <svg class="clk" width="17" height="16" viewBox="0 0 17 16"><circle cx="9" cy="8" r="6.300" fill="#fff" stroke="#333" stroke-width="1.300"/><path d="M9 3v5h5" stroke="#333" fill="none" stroke-width="1.300"/><path d="M9 1Q3 1 3 7" stroke="#1cb028" stroke-width="2.400" fill="none"/><path d="M0 6h6l-3 5z" fill="#1cb028"/></svg>
      <s></s>
      <svg width="14" height="16" viewBox="0 0 14 16"><path d="M.5 1.500h13v13H.5z" fill="#fff" stroke="#34688c"/><path d="M2 11l3-4 2 2 2-4 2 2 2-3" fill="none" stroke="#e01818" stroke-width="1.400"/></svg>
      <span class="coll"><svg width="10" height="12" viewBox="0 0 10 12"><path d="M1.500 1.500l3.500 3 3.500-3M1.500 6.500l3.500 3 3.500-3" fill="none" stroke="#222" stroke-width="1.500"/></svg></span>
    </div>
  </div>
</main>

<div class="sheets"><div class="navs"><svg viewBox="0 0 15 14"><path d="M4.500 3v8M11 3v8L6 7z"/></svg><svg viewBox="0 0 15 14"><path d="M9.500 3v8l-5-4z"/></svg><svg viewBox="0 0 15 14"><path d="M5.500 3v8l5-4z"/></svg><svg viewBox="0 0 15 14"><path d="M10.500 3v8M4 3v8l5-4z"/></svg></div><span class="model">Model</span><span class="motion">Motion Study 1</span></div>
<div class="status"><span class="ed">SolidWorks Premium 2013 x64 Edition</span><span class="ep">Editing Part</span><span class="c1"></span><span class="mm">MMGS</span><i class="upa"></i><b class="qh">?</b><svg class="tg"><use href="#tag"/></svg></div>

<footer class="taskbar">
  <svg class="orb" viewBox="0 0 38 38"><defs><radialGradient id="orb" cx=".5" cy=".85" r=".8"><stop offset="0" stop-color="#7fe0fa"/><stop offset=".45" stop-color="#2a78b4"/><stop offset="1" stop-color="#1d4470"/></radialGradient></defs><circle cx="19" cy="19" r="17.500" fill="url(#orb)" stroke="#33506e"/><path d="M5 13a15 15 0 0128 0q-14-6-28 0" fill="#cfe3f2" opacity=".55"/><path d="M10 10q4-3 8 0l-1.500 8q-4-2-8 0z" fill="#ee6a30"/><path d="M20 11q4 2 9 0l-2 8q-4 2-8 0z" fill="#8cc63c"/><path d="M8 20q4-2 8 0l-1.500 7q-4-2-8 0z" fill="#46a4e4"/><path d="M18 20.500q4 2 8.500 0l-2 7q-4 2-8 0z" fill="#fccc30"/></svg>
  <svg class="ie" viewBox="0 0 32 32"><path d="M22 13H12q1-5 5.500-5t4.500 5M28 18.500H12q.5 5.500 6 5.500 3.500 0 5-2.500h4.500q-2 7.500-10 7.500Q6 28.500 6 16.500 7 4.500 17.500 4T28 18.500" fill="#1f7fd0" stroke="#0d4f94" stroke-width=".8"/><path d="M27 8Q33-2 22 2 8 8 3 20q-4 12 7 9" fill="none" stroke="#f0bc30" stroke-width="2"/></svg>
  <svg class="ex" viewBox="0 0 34 32"><path d="M1 6l3-4h8l3 4h16l1 3v19H1z" fill="#f6dd86" stroke="#b8923c"/><path d="M4 3h6v3H4zM13 5h7v3h-7zM22 7h7v3h-7z" fill="#fff"/><path d="M5 3h3v2H5z" fill="#3a3"/><path d="M14 5h3v2h-3z" fill="#d33"/><path d="M23 7h3v2h-3z" fill="#38c"/><path d="M2 10h30v18H2z" fill="#fbe9a4"/><path d="M6 30V20q0-2 2-2h18q2 0 2 2v10h-5v-6H11v6z" fill="#9fd4ee" stroke="#4b93b8"/></svg>
  <svg class="ch" viewBox="0 0 32 32"><circle cx="16" cy="16" r="14.500" fill="#f7cf28"/><path d="M3.500 8.500A14.500 14.500 0 0128.500 9H16l-6 11z" fill="#dc3c2c"/><path d="M3.500 8.500A14.500 14.500 0 0014 30.400L20 20l-10-1z" fill="#3ea84a"/><circle cx="16" cy="16" r="6.800" fill="#fff"/><circle cx="16" cy="16" r="5.300" fill="#3c80dc"/></svg>
  <div class="task front"><svg viewBox="0 0 32 32"><path d="M1 7l14-6 16 4v20l-15 6L1 26z" fill="#c4141c"/><path d="M1 7l14-6 16 4-15 6z" fill="#f4483c"/><path d="M16 11l15-6v20l-15 6z" fill="#a80c14"/><text x="3" y="24" class="swt">S</text><text x="16" y="24.500" class="swt">W</text></svg></div>
  <div class="task"><svg viewBox="0 0 32 32"><path d="M2 19Q2 8 16 6t13 9q-1 7-8 7-4 0-3 3t-3 4Q2 29 2 19z" fill="#cfe6f6" stroke="#6b9cc0"/><circle cx="7" cy="20" r="2.500" fill="#e04030"/><circle cx="12" cy="13" r="2.500" fill="#58b838"/><circle cx="19" cy="11" r="2.500" fill="#f4b020"/><circle cx="13" cy="23" r="2.500" fill="#8cc0e4" stroke="#6b9cc0"/><path d="M18 31L27 8" stroke="#e08428" stroke-width="2.500"/><path d="M25 9l1-7 6-1-1 6-3 4z" fill="#b08050"/></svg></div>
  <div class="tray"><span class="en">EN</span><i class="upw"></i>
    <svg class="t1" viewBox="0 0 16 16"><path d="M2 3l3-2h5v3M9 14H2V3" fill="none" stroke="#fff" stroke-width="1.600"/><path d="M9 4v4M13 4v4" stroke="#fff" stroke-width="1.400"/><path d="M6.500 7.500h9V10l-3 1.500V15h-3v-3.500l-3-1.500z" fill="#fff"/></svg>
    <svg class="t2" viewBox="0 0 16 16"><path d="M5 4.500h10v7.500H5" fill="none" stroke="#fff" stroke-width="1.500"/><path d="M7 14.500h7M1 1v3.500h4V1M3 4.500V14" stroke="#fff" fill="none" stroke-width="1.500"/></svg>
    <svg class="t3" viewBox="0 0 16 16"><path d="M1 5h3l4-4v14l-4-4H1z" fill="#fff"/><path d="M10 5q2 3 0 6M12 3q4 5 0 10" fill="none" stroke="#fff"/></svg>
    <div class="clock">1:31 CH<br>11/05/2015</div></div>
  <div class="peek"></div>
</footer>
</div>
</body>
</html>
```
FILE: styles.css
```css
* { box-sizing: border-box; }
html, body { margin: 0; width: 1366px; height: 768px; overflow: hidden; }
body { font: 11px/13px "Noto Sans", "DejaVu Sans", sans-serif; color: #1b1b1b; }
ul, p { margin: 0; padding: 0; list-style: none; }
svg { display: block; width: 16px; height: 16px; flex: none; }
.defs { position: absolute; width: 0; height: 0; }
.app { display: flex; flex-direction: column; width: 1366px; height: 768px; }

.dd { display: block; width: 0; height: 0; border: 3px solid transparent; border-top: 3px solid #3a3a58; border-bottom: 0; flex: none; }
.dd.dim { border-top-color: #a0a3b4; }
.dd.blk { border-width: 3px 3px 0; border-top-color: #000; }

/* title bar */
.titlebar { display: flex; align-items: center; height: 29px; flex: none; background: linear-gradient(#eef1fc, #dfe3f2 35%, #b5bbd0); border-bottom: 1px solid #4e4f6a; }
.titlebar > * { flex: none; }
.brand { display: flex; align-items: center; width: 125px; height: 28px; padding-left: 3px; background: linear-gradient(#fff, #f4f4f6); }
.brand svg { width: 24px; height: 22px; }
.brand-name { font: italic 14px/16px "Open Sans", sans-serif; color: #d8261c; margin: 2px 0 0 2px; letter-spacing: .15px; white-space: nowrap; }
.brand-name b { font-weight: 800; }
.brand-arrow { display: flex; align-items: center; justify-content: center; width: 10px; height: 28px; background: linear-gradient(#9095b5, #5f6488); }
.brand-arrow::before { content: ""; border: 4px solid transparent; border-left-color: #20203c; border-right: 0; }
.quick { display: flex; margin-left: 31px; width: 528px; }
.q { display: flex; align-items: center; width: 36px; gap: 7px; }
.q.s { width: 23px; }
.doc-title { width: 361px; color: #2e2e40; letter-spacing: -.17px; padding-top: 1px; }
.search { display: flex; align-items: center; width: 202px; height: 22px; padding-left: 5px; border: 1px solid #4c4f5c; border-radius: 4px; background: linear-gradient(#dfe2ea, #fdfdfe); color: #555; }
.search span { width: 139px; margin-left: 4px; letter-spacing: -.45px; font-size: 11px; }
.search .lens { width: 18px; height: 18px; }
.search .dd { margin-left: 5px; }
.winbtns { display: flex; align-items: center; margin-left: 8px; color: #555868; }
.winbtns .help { font: bold 15px/18px "Liberation Sans", sans-serif; width: 12px; text-align: center; color: #fff; -webkit-text-stroke: .8px #4b4e5e; }
.winbtns .dd { margin: 0 8px 0 9px; }
.winbtns svg { margin-right: 7px; }
.winbtns svg + svg { margin-right: 8px; }

/* ribbon */
.ribbon { position: relative; display: flex; height: 75px; flex: none; padding-top: 2px; background: linear-gradient(#fbfbfe, #eff0f7 45%, #d0d2e0); border-bottom: 2px solid #54566e; color: #26265c; }
.rb { display: flex; flex-direction: column; align-items: center; padding-top: 12px; flex: none; text-align: center; white-space: nowrap; height: 70px; }
.rb p { line-height: 13px; letter-spacing: -.42px; }
.rb .up { display: flex; flex-direction: column; align-items: center; margin-top: -7px; }
.rb .below { margin-top: 12px; }
.rb.active { width: 50px; margin-left: -1px; margin-right: 1px; border: 1px solid #777a92; border-radius: 4px; background: linear-gradient(#c0c2e2, #b2b4da); padding-top: 11px; }
.rb.sep { border-left: 1px solid #c3c6d6; }
.rb.snug p { letter-spacing: -.6px; }
.rl { display: flex; flex-direction: column; padding: 2px 0 0 2px; flex: none; height: 72px; letter-spacing: -.4px; }
.rl.b { border-left: 1px solid #c3c6d6; padding-left: 3px; height: 70px; }
.rl.n { padding-left: 4px; }
.rl li { display: flex; flex: none; align-items: center; gap: 6px; height: 18px; margin-bottom: 5px; white-space: nowrap; }
.rl .snug { letter-spacing: -.58px; }
.rl .off { color: #88889a; letter-spacing: -.55px; }
.rl .blue { color: #1038d0; } .rl .red { color: #d81010; }
.more { font: 16px/16px "Noto Sans", sans-serif; margin: 25px 0 0 6px; color: #333; }
.mark { position: absolute; right: 4px; top: 1px; width: 80px; height: 72px; }

/* stage */
.stage { position: relative; display: grid; grid-template-columns: 221px 1fr; height: 589px; flex: none; }
.scene { grid-area: 1 / 2; width: 1145px; height: 589px; }
.callout text { font: 11px "Liberation Sans", sans-serif; fill: #36367c; }
.left { grid-area: 1 / 1; display: flex; flex-direction: column; min-width: 0; background: #cfd3e4; }
.tabs { display: flex; width: 351px; height: 18px; z-index: 2; font: 12px/16px "Liberation Sans", sans-serif; letter-spacing: .1px; }
.tabs span { flex: none; height: 18px; text-align: center; color: #4d4d5c; background: linear-gradient(#b4b7ce, #c3c5d8); border-right: 2px solid #5d5f75; border-bottom: 2px solid #5d5f75; white-space: nowrap; }
.tabs .on { height: 20px; margin-top: -1px; font-weight: bold; color: #16161e; background: #eceef6; line-height: 18px; }
.cols { display: flex; height: 571px; }
.tools { width: 28px; background: linear-gradient(#cdd1e3, #b9bdd1); }
.toolbox { display: flex; flex-direction: column; align-items: center; gap: 7px; height: 315px; margin-top: 3px; padding-top: 17px; background: linear-gradient(90deg, #eef2fd, #c4c8df); border-bottom: 2px solid #9ea2b6; position: relative; }
.toolbox::before { content: ""; position: absolute; left: 4px; top: 6px; width: 21px; border-top: 2px dotted #9499ad; }
.toolbox hr { width: 20px; height: 1px; margin: -1px 0 0; border: 0; background: #80859a; }
.tree-panel { position: relative; display: flex; flex-direction: column; width: 193px; background: #e1e4ec; border-right: 3px solid #62647c; }
.ptabs { display: flex; align-items: flex-end; height: 30px; background: linear-gradient(#eceef6 0 3px, #70748c 3px 4px, #cdd1e5 4px); }
.ptabs span { display: flex; align-items: center; justify-content: center; width: 26px; height: 21px; margin-right: 2px; border: 1px solid #8a8fa8; border-bottom: 0; border-radius: 4px 4px 0 0; background: #b9bdd4; }
.ptabs .on { background: #e1e4ec; }
.ptabs em { font: 17px/24px "Noto Sans", sans-serif; margin-left: 36px; color: #555; }
.filter { margin: 3px 0 0 2px; width: 120px; height: 17px; border: 1px solid #6c708c; border-radius: 9px; background: #f3f5fb; padding: 0 0 0 3px; }
.root { padding: 4px 0 0 2px; height: 22px; }
.tree { font: 12px/18px "Noto Sans", sans-serif; color: #111; letter-spacing: -.32px; margin-top: -2px; }
.tree li { position: relative; display: flex; align-items: center; height: 18px; padding-left: 21px; }
.tree li::before { content: ""; position: absolute; left: 10px; top: 0; height: 18px; width: 10px; border-left: 1px dotted #777; background: linear-gradient(90deg, #777 50%, transparent 50%) 0 9px / 2px 1px repeat-x; }
.tree li.last:not(.sub)::before { height: 10px; }
.tree li.sub { padding-left: 40px; }
.tree li.sub::before { width: 1px; background: none; }
.tree li.sub::after { content: ""; position: absolute; left: 29px; top: 0; width: 10px; height: 18px; border-left: 1px dotted #777; background: linear-gradient(90deg, #777 50%, transparent 50%) 0 9px / 2px 1px repeat-x; }
.tree li.sub.last::after { height: 10px; }
.tree li.x::after { content: ""; position: absolute; left: 6px; top: 5px; width: 9px; height: 9px; border: 1px solid #8d93a5; background: linear-gradient(#1c2c64, #1c2c64) center / 5px 1px no-repeat, linear-gradient(#1c2c64, #1c2c64) center / 1px 5px no-repeat, #fafbfd; }
.tree li.minus::after { background: linear-gradient(#1c2c64, #1c2c64) center / 5px 1px no-repeat, #fafbfd !important; }
.tree span { margin-left: 5px; white-space: nowrap; line-height: 15px; }
.tree .sel { background: #3399ff; color: #fff; padding: 0 1px; }
.tree .off { color: #8b8b92; }
.rollback { height: 3px; background: #0c6ee0; border-top: 1px solid #48a0ff; margin-top: 1px; }
.hscroll { display: flex; align-items: center; height: 17px; background: #ececee; margin-top: auto; margin-bottom: 2px; padding: 0 5px; }
.hscroll i { border: 4px solid transparent; }
.hscroll .la { border-right-color: #222; border-left: 0; }
.hscroll .ra { border-left-color: #222; border-right: 0; margin-left: auto; }
.hscroll b { display: flex; gap: 2px; align-items: center; justify-content: center; width: 86px; height: 15px; margin-left: 8px; border: 1px solid #8f8f93; border-radius: 2px; background: linear-gradient(#f4f4f5, #cfcfd3); }
.hscroll u { width: 1px; height: 7px; background: #555; }
.grip { position: absolute; left: 219px; top: 280px; width: 10px; height: 28px; display: flex; flex-direction: column; justify-content: space-around; align-items: center; background: #c3c7dc; border: 1px solid #6f738b; border-left: 0; border-radius: 0 4px 4px 0; }
.grip i { border: 3px solid transparent; border-right-color: #44486c; border-left: 0; }
.hud { position: absolute; left: 653px; top: 5px; display: flex; opacity: .85; }
.hud span { display: flex; align-items: center; width: 23px; gap: 4px; }
.hud .w { width: 33px; }
.docbtns { position: absolute; left: 1247px; top: 6px; display: flex; gap: 7px; color: #9699a6; }
.taskpane { position: absolute; right: 0; top: 59px; display: flex; flex-direction: column; gap: 1px; }
.taskpane span { display: flex; align-items: center; padding-left: 4px; width: 24px; height: 23px; background: linear-gradient(#c3c7da, #a6aac4); border: 1px solid #6f7590; border-right: 0; border-radius: 4px 0 0 4px; }
.taskpane .lit { background: #eff1f6; }

/* measure dialog */
.dialog { position: absolute; left: 49px; top: 49px; width: 298px; height: 59px; border: 1px solid #33363f; border-radius: 4px 4px 0 0; background: #d7e5f3; z-index: 3; }
.dtitle { display: flex; align-items: center; height: 24px; padding-left: 4px; background: linear-gradient(90deg, #b3cadf, #c9dae8 60%, #b9cfe2); border-radius: 3px 3px 0 0; font: 12px/16px "Noto Sans", sans-serif; color: #3f4650; }
.dtitle > span { margin-left: 4px; width: 204px; letter-spacing: -.5px; white-space: nowrap; padding-top: 2px; }
.dtitle b { display: flex; align-items: center; justify-content: center; width: 31px; height: 17px; margin-right: 2px; border: 1px solid #7d93ac; border-radius: 2px; background: linear-gradient(#dae6f1, #b5cadd); color: #444a55; }
.dtitle b svg { width: 13px; height: 13px; }
.dbody { display: flex; align-items: center; margin: 0 2px; background: #f0f0f0; height: 28px; padding: 0 0 4px 2px; }
.dbody > svg, .dbody span svg { width: auto; height: auto; }
.dbody > * { flex: none; }
.dd.big { border-width: 4px 4px 0; margin: 0 0 0 5px; }
.dd.g { border-top-color: #777; }
.inmm { display: flex; flex-direction: column; align-items: center; font: bold 9px/11px "Liberation Sans", sans-serif; letter-spacing: -.3px; margin: 0 5px 0 6px; width: 17px; }
.press { width: 22px; height: 21px; margin-right: 1px; border: 1px solid #777; border-radius: 3px; background: #dcdcdc; }
.yl { margin-left: 3px; } .dbody .yl + .dd { margin-left: 7px; }
.clk { margin-left: 7px; }
.dbody s { width: 1px; height: 19px; background: #999; margin: 0 7px 0 5px; }
.coll { display: flex; align-items: center; justify-content: center; width: 21px; height: 19px; margin-left: auto; margin-right: 7px; border: 1px solid #666; border-radius: 3px; background: linear-gradient(#fff, #ddd); margin-bottom: 2px; }

/* bottom */
.sheets { display: flex; height: 16px; flex: none; border-top: 1px solid #111; background: #e1e4ec; font: 12px/14px "Liberation Sans", sans-serif; }
.navs { display: flex; gap: 1px; width: 97px; padding-left: 30px; background: #c0c4d6; }
.navs svg { width: 15px; height: 14px; border: 1px solid #8e92a6; background: #b7bbcd; fill: #858aa2; stroke: #858aa2; }
.model { width: 54px; font-weight: bold; text-align: center; background: #d9ddeb; border: 2px solid #55586e; border-top: 0; line-height: 14px; height: 15px; }
.motion { width: 104px; padding-left: 8px; background: #bdc1d4; border: 2px solid #55586e; border-width: 1px 2px 2px 0; height: 14px; line-height: 12px; white-space: nowrap; }
.status { display: flex; align-items: center; height: 19px; flex: none; background: linear-gradient(#d6d8e6, #b3b7c8); border-top: 1px solid #55576b; font-size: 11.500px; color: #111; letter-spacing: -.2px; }
.status > * { flex: none; }
.ed { width: 1104px; padding-left: 2px; }
.ep { width: 72px; padding-left: 5px; border-left: 1px solid #e9e9f2; border-right: 1px solid #e9e9f2; white-space: nowrap; }
.c1 { width: 17px; height: 14px; border-right: 1px solid #e9e9f2; }
.mm { width: 66px; padding-left: 21px; }
.upa { border: 3px solid transparent; border-bottom-color: #333; border-top: 0; }
.qh { width: 13px; height: 13px; margin-left: 16px; background: #fff; border: 1px solid #2c6c8c; color: #109820; font: bold 12px/11px "Liberation Sans", sans-serif; text-align: center; }
.tg { margin-left: 50px; }

.taskbar { display: flex; align-items: center; height: 40px; flex: none; background: linear-gradient(90deg, #8093a9 0, #8799af 50px, #a7c0dc 90px, #a9c1dd 1090px, #8395ab 1135px, #8193a9); border-top: 1px solid #5b6776; }
.orb { width: 38px; height: 38px; margin-left: 8px; }
.ie { width: 32px; height: 32px; margin-left: 28px; }
.ex { width: 34px; height: 32px; margin-left: 28px; }
.ch { width: 30px; height: 30px; margin-left: 30px; }
.task { display: flex; align-items: center; justify-content: center; width: 59px; height: 38px; margin-left: 4px; border: 1px solid #4c5c6e; border-radius: 3px; background: linear-gradient(135deg, #c6d5e5, #a6bad0); box-shadow: inset 0 0 0 1px #d8e4f0; }
.task svg { width: 32px; height: 32px; }
.task.front { width: 55px; margin-left: 17px; margin-right: 3px; background: linear-gradient(135deg, #fff, #d3dce8); box-shadow: inset 0 0 0 1px #fff, 3px 0 0 #c9d8e8, 4px 0 0 #4c5c6e; }
.task.front svg { margin-right: 2px; }
.swt { font: bold 15px "Liberation Sans", sans-serif; fill: #fff; }
.tray { display: flex; align-items: center; margin-left: auto; width: 203px; color: #fff; height: 40px; }
.en { width: 32px; margin-top: -4px; font-size: 12px; letter-spacing: -.3px; }
.upw { border: 4px solid transparent; border-bottom: 4px solid #fff; border-top: 0; margin-top: 2px; }
.t1 { margin-left: 12px; } .t2 { margin-left: 8px; } .t3 { margin-left: 8px; }
.clock { font-size: 12px; line-height: 17px; text-align: center; width: 62px; margin-left: 16px; white-space: nowrap; letter-spacing: -.5px; }
.peek { width: 15px; height: 39px; border: 1px solid #55657a; background: linear-gradient(135deg, #a5b3c3, #66788d); }
```
